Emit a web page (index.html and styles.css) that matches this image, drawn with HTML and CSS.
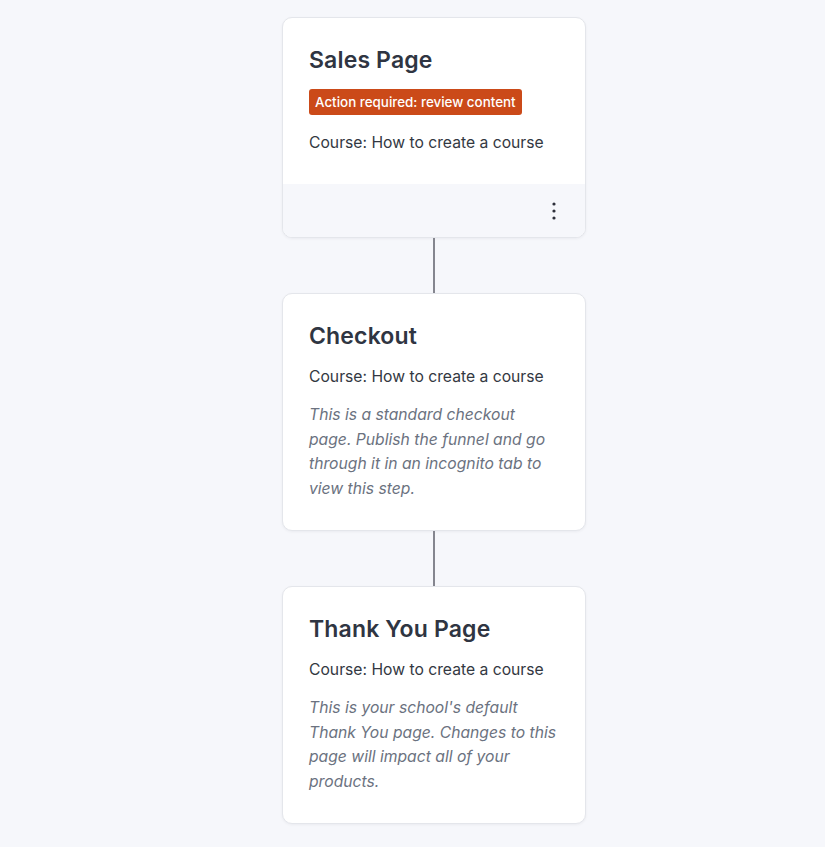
FILE: index.html
```html
<!DOCTYPE html>
<html lang="en">
<head>
<meta charset="utf-8">
<title>Funnel</title>
<link rel="stylesheet" href="styles.css">
</head>
<body>
<main class="flow">
  <section class="card">
    <div class="card-body card-body--footed">
      <h2 class="card-title card-title--tight">Sales Page</h2>
      <span class="badge">Action required: review content</span>
      <p class="course">Course: How to create a course</p>
    </div>
    <div class="card-footer">
      <button class="menu-btn" aria-label="More options">
        <svg width="6" height="20" viewBox="0 0 6 20"><circle cx="3" cy="3" r="1.6"/><circle cx="3" cy="10" r="1.6"/><circle cx="3" cy="17" r="1.6"/></svg>
      </button>
    </div>
  </section>
  <div class="connector"></div>
  <section class="card">
    <div class="card-body">
      <h2 class="card-title">Checkout</h2>
      <p class="course">Course: How to create a course</p>
      <p class="note">This is a standard checkout page. Publish the funnel and go through it in an incognito tab to view this step.</p>
    </div>
  </section>
  <div class="connector"></div>
  <section class="card">
    <div class="card-body">
      <h2 class="card-title">Thank You Page</h2>
      <p class="course">Course: How to create a course</p>
      <p class="note">This is your school's default Thank You page. Changes to this page will impact all of your products.</p>
    </div>
  </section>
</main>
</body>
</html>
```
FILE: styles.css
```css
* { box-sizing: border-box; }
html, body { margin: 0; padding: 0; }
body {
  background: #f6f7fb;
  font-family: Inter, "Noto Sans", sans-serif;
  color: #333842;
}
.flow {
  display: flex;
  flex-direction: column;
  align-items: center;
  padding: 17px 0 20px 43px;
}
.card {
  width: 304px;
  background: #fff;
  border: 1px solid #e4e6eb;
  border-radius: 10px;
  box-shadow: 0 1px 3px rgba(20, 24, 40, 0.05);
  overflow: hidden;
}
.card-body {
  padding: 27px 26px 28px 26px;
  display: flex;
  flex-direction: column;
  align-items: flex-start;
}
.card-body--footed { padding-bottom: 30px; }
.card-title {
  margin: 0 0 15px 0;
  font-family: Inter, "Noto Sans", sans-serif;
  font-weight: 600;
  font-size: 23px;
  line-height: 30px;
  color: #2f3542;
  letter-spacing: 0.15px;
}
.card-title--tight { margin-bottom: 14px; }
.badge {
  display: inline-block;
  background: #cb4a19;
  color: #fff;
  font-size: 13.4px;
  font-weight: 500;
  line-height: 26px;
  height: 26px;
  padding: 0 6px;
  border-radius: 3px;
  margin-bottom: 17px;
}
.course {
  margin: 0;
  font-size: 15.7px;
  line-height: 22px;
  color: #333842;
}
.note {
  margin: 15px 0 0 0;
  font-size: 15.7px;
  line-height: 24.7px;
  font-style: italic;
  color: #6b7280;
}
.card-footer {
  height: 53px;
  background: #f6f7fb;
  display: flex;
  align-items: center;
  justify-content: flex-end;
  padding-right: 27px;
}
.menu-btn {
  border: 0;
  background: transparent;
  padding: 0;
  width: 8px;
  height: 20px;
  display: flex;
  align-items: center;
  justify-content: center;
  cursor: pointer;
}
.menu-btn svg { fill: #2d2f3a; display: block; }
.connector {
  width: 2px;
  height: 55px;
  background: #85868f;
}
```
